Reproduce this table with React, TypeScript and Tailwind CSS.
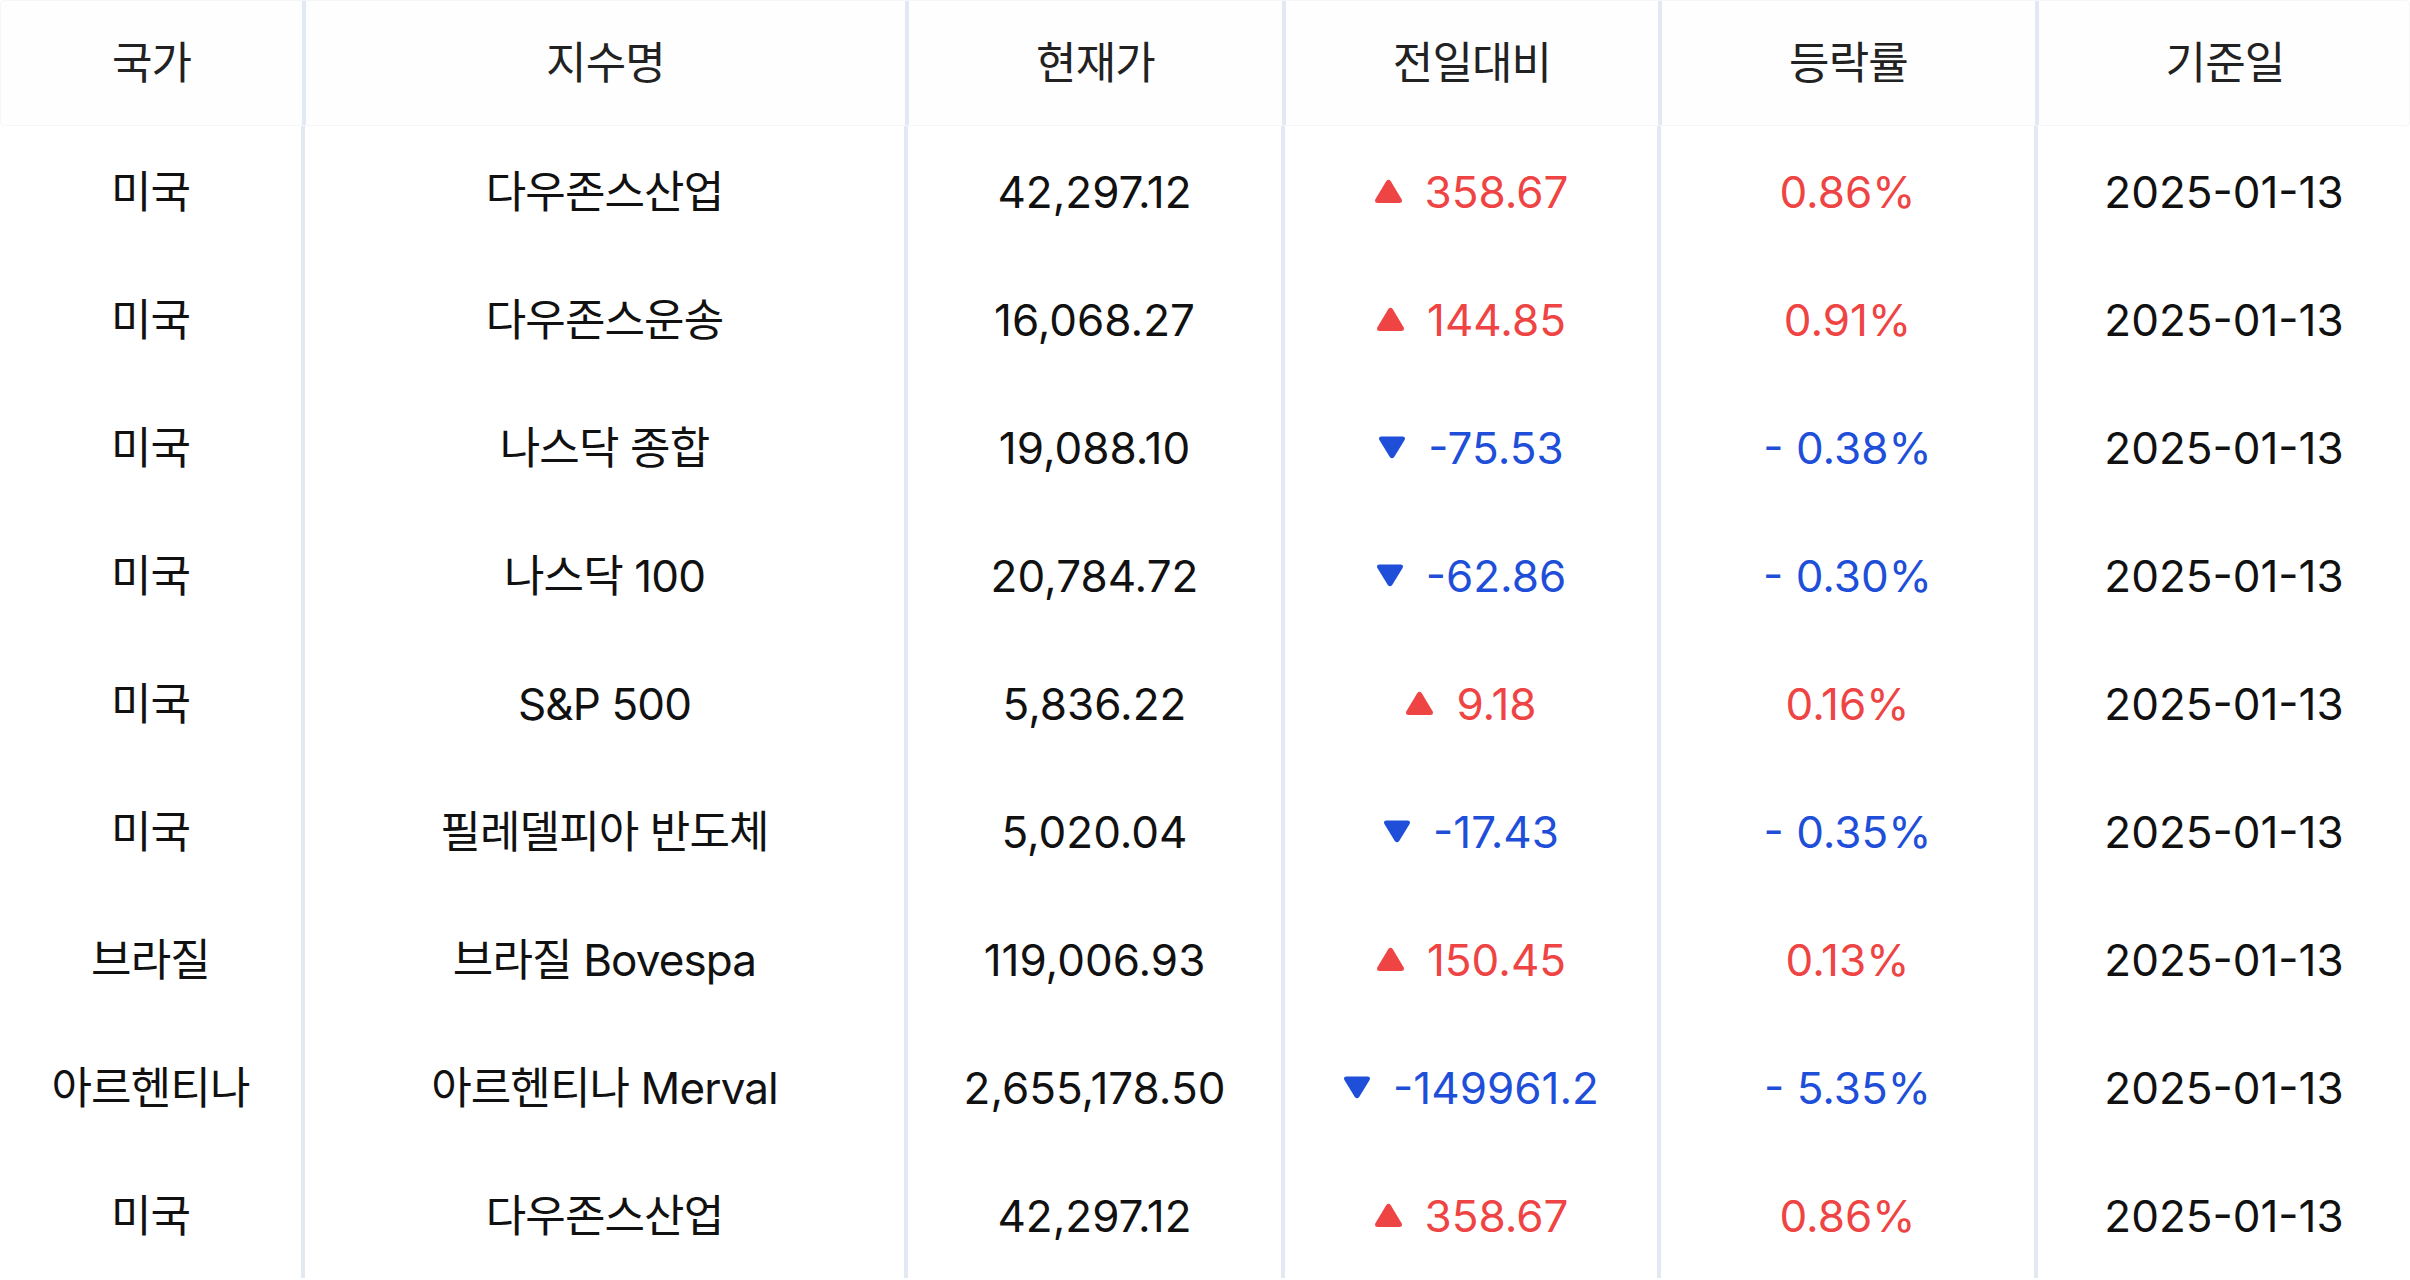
import React from "react";

type IndexRow = {
  country: string;
  name: string;
  price: string;
  change: string;
  rate: string;
  date: string;
  up: boolean;
};

const rows: IndexRow[] = [
  { country: "미국", name: "다우존스산업", price: "42,297.12", change: "358.67", rate: "0.86%", date: "2025-01-13", up: true },
  { country: "미국", name: "다우존스운송", price: "16,068.27", change: "144.85", rate: "0.91%", date: "2025-01-13", up: true },
  { country: "미국", name: "나스닥 종합", price: "19,088.10", change: "-75.53", rate: "- 0.38%", date: "2025-01-13", up: false },
  { country: "미국", name: "나스닥 100", price: "20,784.72", change: "-62.86", rate: "- 0.30%", date: "2025-01-13", up: false },
  { country: "미국", name: "S&P 500", price: "5,836.22", change: "9.18", rate: "0.16%", date: "2025-01-13", up: true },
  { country: "미국", name: "필레델피아 반도체", price: "5,020.04", change: "-17.43", rate: "- 0.35%", date: "2025-01-13", up: false },
  { country: "브라질", name: "브라질 Bovespa", price: "119,006.93", change: "150.45", rate: "0.13%", date: "2025-01-13", up: true },
  { country: "아르헨티나", name: "아르헨티나 Merval", price: "2,655,178.50", change: "-149961.2", rate: "- 5.35%", date: "2025-01-13", up: false },
  { country: "미국", name: "다우존스산업", price: "42,297.12", change: "358.67", rate: "0.86%", date: "2025-01-13", up: true },
];

const headers = ["국가", "지수명", "현재가", "전일대비", "등락률", "기준일"];

const gridCols = "grid grid-cols-[301px_603px_377px_376px_377px_376px]";
const cell = "flex items-center justify-center";
const rowCell = "flex items-center justify-center pt-[3px]";
const sep = "border-l-4 border-[#e3e9f2]";
const ko = "tracking-[-0.02em]";

const Triangle = ({ up }: { up: boolean }) => {
  if (up) {
    return (
      <svg width="29" height="25" viewBox="0 0 29 25" className="shrink-0">
        <path
          d="M12.2 2.2 Q14.5 -0.6 16.8 2.2 L27.6 20.2 Q29 24 25.4 24 H3.6 Q0 24 1.4 20.2 Z"
          fill="#ef4444"
        />
      </svg>
    );
  }
  return (
    <svg width="28" height="23" viewBox="0 0 28 23" className="shrink-0">
      <path
        d="M3.4 0.5 H24.6 Q28 0.5 26.6 4 L16.2 21 Q14 23.6 11.8 21 L1.4 4 Q0 0.5 3.4 0.5 Z"
        fill="#1f4fd8"
      />
    </svg>
  );
};

export default function App() {
  return (
    <div
      className="h-[1280px] w-[2410px] overflow-hidden bg-white text-[44px] leading-none text-[#111]"
      style={{ fontFamily: "Inter, 'Noto Sans CJK KR', sans-serif" }}
    >
      <div className={`${gridCols} h-[126px] rounded-sm border border-[#f6f6f6] bg-[#fefefe] text-[#222] ${ko}`}>
        {headers.map((h, i) => (
          <div key={h} className={`${cell} ${i > 0 ? sep : ""}`}>
            {h}
          </div>
        ))}
      </div>

      {rows.map((r, idx) => {
        const color = r.up ? "text-[#ef4444]" : "text-[#1f4fd8]";
        return (
          <div key={idx} className={`${gridCols} h-[128px]`}>
            <div className={`${rowCell} ${ko}`}>{r.country}</div>
            <div className={`${rowCell} ${sep} ${ko}`}>{r.name}</div>
            <div className={`${rowCell} ${sep}`}>{r.price}</div>
            <div className={`${rowCell} ${sep} gap-[22px] ${color}`}>
              <Triangle up={r.up} />
              <span>{r.change}</span>
            </div>
            <div className={`${rowCell} ${sep} ${color}`}>{r.rate}</div>
            <div className={`${rowCell} ${sep}`}>{r.date}</div>
          </div>
        );
      })}
    </div>
  );
}
